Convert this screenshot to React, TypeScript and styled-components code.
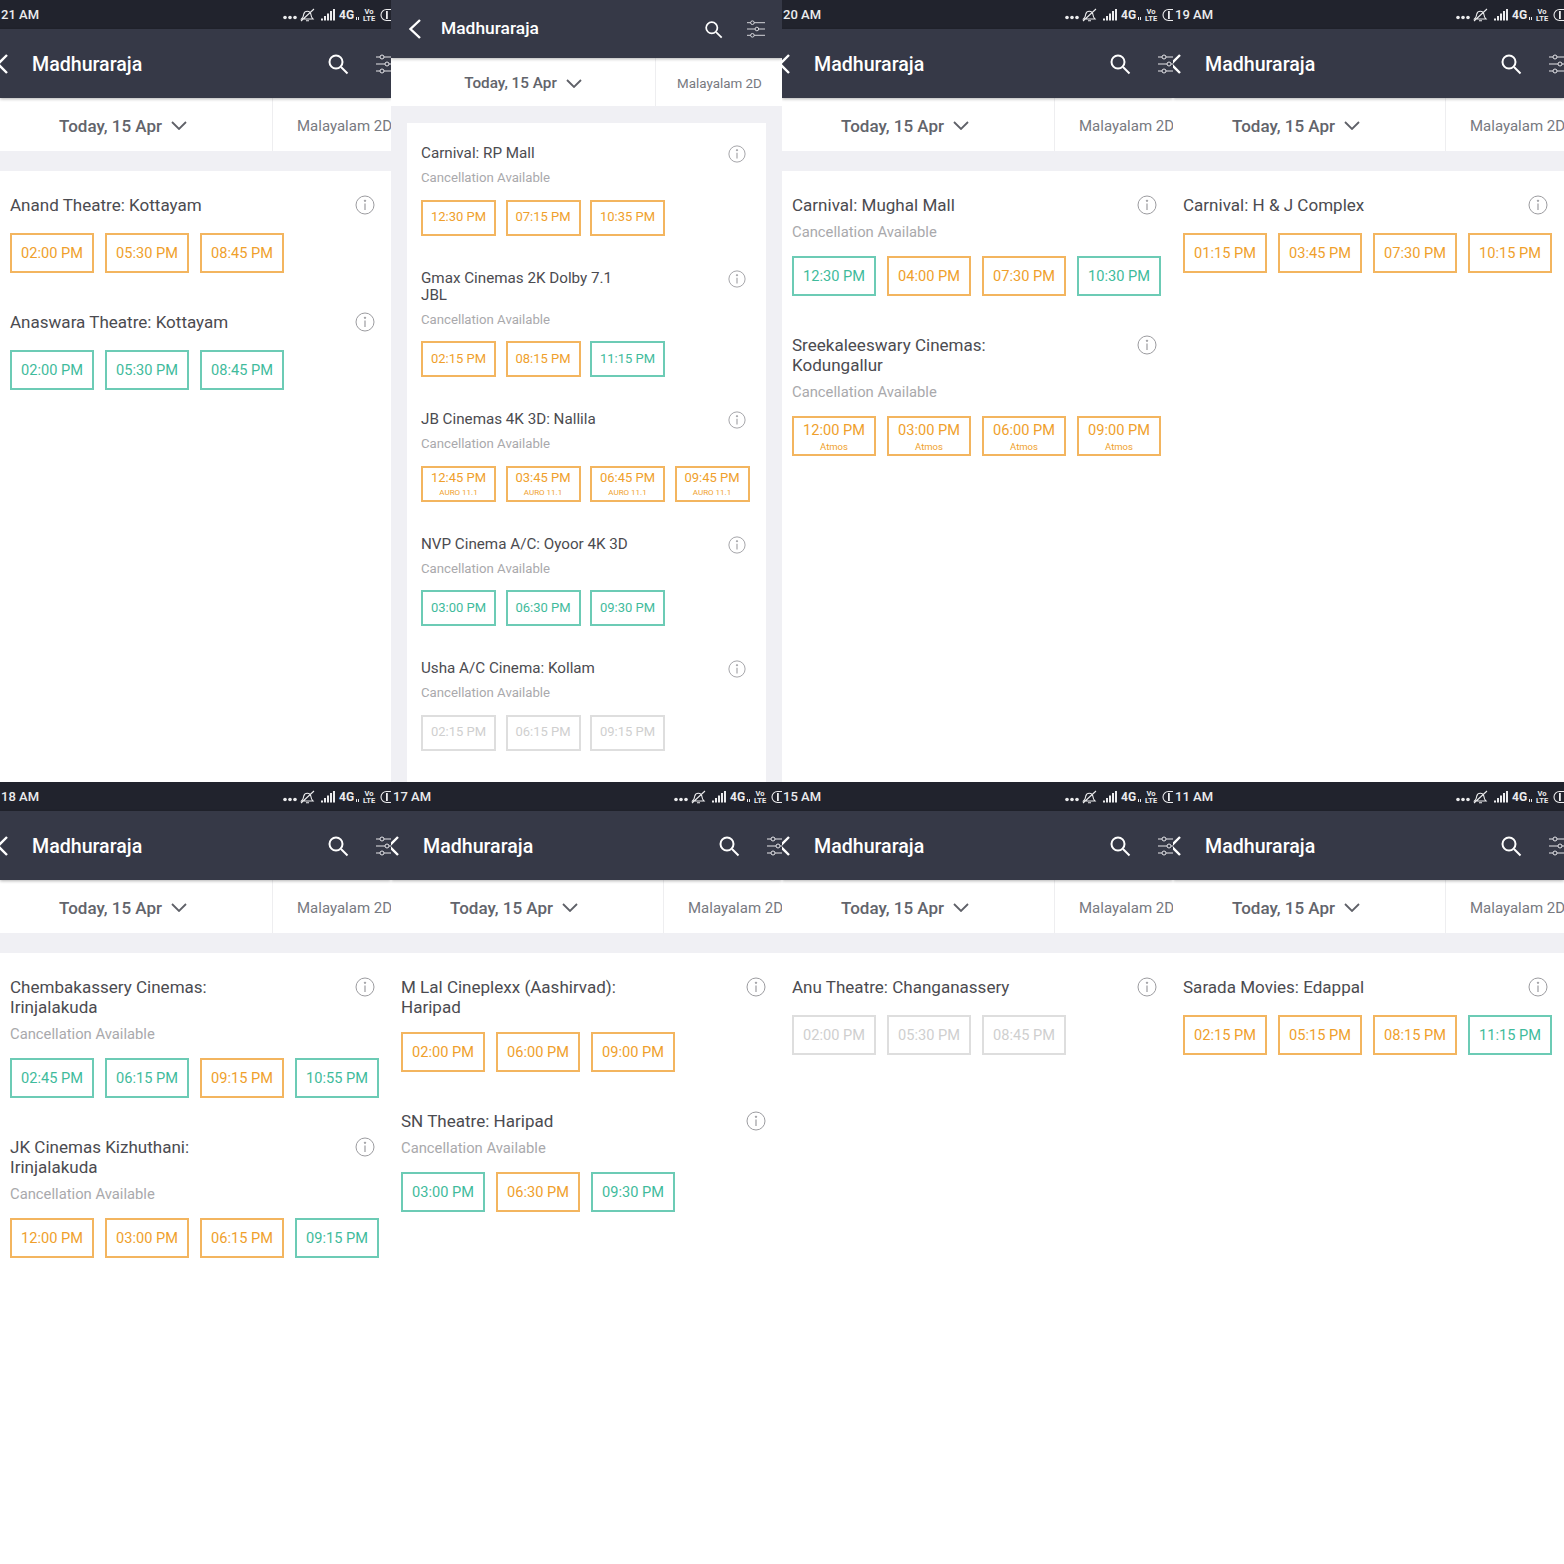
import React from "react";
import styled, { createGlobalStyle, ThemeProvider } from "styled-components";

const full = {
  headerH: 69, titleSize: 19.6, titleTop: 2, titleBottom: 0, backH: 20, searchSize: 22, filterW: 20,
  filterH: 53, dateW: 273, dateSize: 17, dateEnd: 26, langSize: 15, langLeft: 24,
  gutter: 20, sidePad: 0, cardPadTop: 24, cardPadLeft: 10, cardPadRight: 16,
  nameSize: 17.05, nameLine: 20, nameMax: 262, plainMin: 23, infoSize: 20, subSize: 14.8, subLine: 20, subTop: 7, subBottom: 14,
  plainBottom: 15, blockGap: 39, btnW: 84, btnH: 40, btnGap: 11, timeSize: 14.6, tagSize: 9.5, tagTop: 4,
};

const compact = {
  headerH: 58, titleSize: 17.4, titleTop: 0, titleBottom: 3, backH: 20, searchSize: 19, filterW: 18,
  filterH: 48, dateW: 265, dateSize: 15.3, dateEnd: 0, langSize: 13.4, langLeft: 21,
  gutter: 17, sidePad: 16, cardPadTop: 22, cardPadLeft: 14, cardPadRight: 20,
  nameSize: 15.2, nameLine: 17.5, nameMax: 212, plainMin: 0, infoSize: 18, subSize: 13.2, subLine: 18, subTop: 6, subBottom: 12.5,
  plainBottom: 13, blockGap: 34, btnW: 75, btnH: 36, btnGap: 9.5, timeSize: 13, tagSize: 8, tagTop: 3,
};

type Tone = "orange" | "teal" | "gray";
type Show = [string, Tone];
type Theatre = { name: string; cancel?: boolean; tag?: string; shows: Show[] };
type ScreenData = { clock?: string; clockLeft?: number; compact?: boolean; theatres: Theatre[] };

const o = (t: string): Show => [t, "orange"];
const g = (t: string): Show => [t, "teal"];
const x = (t: string): Show => [t, "gray"];

const screens: ScreenData[] = [
  {
    clock: "21 AM",
    clockLeft: 1,
    theatres: [
      { name: "Anand Theatre: Kottayam", shows: [o("02:00 PM"), o("05:30 PM"), o("08:45 PM")] },
      { name: "Anaswara Theatre: Kottayam", shows: [g("02:00 PM"), g("05:30 PM"), g("08:45 PM")] },
    ],
  },
  {
    compact: true,
    theatres: [
      { name: "Carnival: RP Mall", cancel: true, shows: [o("12:30 PM"), o("07:15 PM"), o("10:35 PM")] },
      { name: "Gmax Cinemas 2K Dolby 7.1 JBL", cancel: true, shows: [o("02:15 PM"), o("08:15 PM"), g("11:15 PM")] },
      { name: "JB Cinemas 4K 3D: Nallila", cancel: true, tag: "AURO 11.1", shows: [o("12:45 PM"), o("03:45 PM"), o("06:45 PM"), o("09:45 PM")] },
      { name: "NVP Cinema A/C: Oyoor 4K 3D", cancel: true, shows: [g("03:00 PM"), g("06:30 PM"), g("09:30 PM")] },
      { name: "Usha A/C Cinema: Kollam", cancel: true, shows: [x("02:15 PM"), x("06:15 PM"), x("09:15 PM")] },
    ],
  },
  {
    clock: "20 AM",
    clockLeft: 1,
    theatres: [
      { name: "Carnival: Mughal Mall", cancel: true, shows: [g("12:30 PM"), o("04:00 PM"), o("07:30 PM"), g("10:30 PM")] },
      { name: "Sreekaleeswary Cinemas: Kodungallur", cancel: true, tag: "Atmos", shows: [o("12:00 PM"), o("03:00 PM"), o("06:00 PM"), o("09:00 PM")] },
    ],
  },
  {
    clock: "19 AM",
    clockLeft: 2,
    theatres: [
      { name: "Carnival: H & J Complex", shows: [o("01:15 PM"), o("03:45 PM"), o("07:30 PM"), o("10:15 PM")] },
    ],
  },
  {
    clock: "18 AM",
    clockLeft: 1,
    theatres: [
      { name: "Chembakassery Cinemas: Irinjalakuda", cancel: true, shows: [g("02:45 PM"), g("06:15 PM"), o("09:15 PM"), g("10:55 PM")] },
      { name: "JK Cinemas Kizhuthani: Irinjalakuda", cancel: true, shows: [o("12:00 PM"), o("03:00 PM"), o("06:15 PM"), g("09:15 PM")] },
    ],
  },
  {
    clock: "17 AM",
    clockLeft: 2,
    theatres: [
      { name: "M Lal Cineplexx (Aashirvad): Haripad", shows: [o("02:00 PM"), o("06:00 PM"), o("09:00 PM")] },
      { name: "SN Theatre: Haripad", cancel: true, shows: [g("03:00 PM"), o("06:30 PM"), g("09:30 PM")] },
    ],
  },
  {
    clock: "15 AM",
    clockLeft: 1,
    theatres: [{ name: "Anu Theatre: Changanassery", shows: [x("02:00 PM"), x("05:30 PM"), x("08:45 PM")] }],
  },
  {
    clock: "11 AM",
    clockLeft: 2,
    theatres: [
      { name: "Sarada Movies: Edappal", shows: [o("02:15 PM"), o("05:15 PM"), o("08:15 PM"), g("11:15 PM")] },
    ],
  },
];

const toneColor: Record<Tone, { line: string; text: string }> = {
  orange: { line: "#f3b55f", text: "#ef9f2c" },
  teal: { line: "#6ccbb5", text: "#3fbb9c" },
  gray: { line: "#dedede", text: "#cfcfcf" },
};

const GlobalStyle = createGlobalStyle`
  html, body { margin: 0; padding: 0; background: #fff; }
  body { font-family: Roboto, "Liberation Sans", sans-serif; }
`;

const Wall = styled.div`
  display: grid;
  grid-template-columns: repeat(4, 391px);
  grid-auto-rows: 782px;
  width: 1564px;
`;

const Phone = styled.section`
  overflow: hidden;
  display: flex;
  flex-direction: column;
  background: ${(p) => (p.theme.sidePad ? "#f0f0f4" : "#fff")};
`;

const StatusBar = styled.div<{ $left: number }>`
  flex: 0 0 29px;
  display: flex;
  align-items: center;
  background: #21232d;
  color: #ececee;
  padding-left: ${(p) => p.$left}px;
`;

const Clock = styled.span`
  flex: 0 0 auto;
  font-size: 13px;
  font-weight: 500;
`;

const StatusIcons = styled.div`
  margin-left: auto;
  flex: 0 0 109px;
  min-width: 0;
  display: flex;
  align-items: center;
  svg {
    flex: 0 0 auto;
  }
`;

const NetLabel = styled.span`
  flex: 0 0 15px;
  font-size: 12px;
  font-weight: 700;
`;

const VoLte = styled.span`
  flex: 0 0 14px;
  font-size: 7.5px;
  line-height: 7px;
  font-weight: 700;
  text-align: center;
  margin-left: 2px;
`;

const Header = styled.header`
  flex: 0 0 ${(p) => p.theme.headerH}px;
  display: flex;
  align-items: center;
  background: #363947;
  box-shadow: 0 1px 3px rgba(0, 0, 0, 0.3);
  position: relative;
  z-index: 1;
  color: #fff;
`;

const Back = styled.svg<{ $clipped: boolean }>`
  flex: 0 0 auto;
  margin-left: ${(p) => (p.$clipped ? -2 : 17)}px;
  width: ${(p) => (p.$clipped ? 10 : 13)}px;
  height: ${(p) => p.theme.backH}px;
`;

const Title = styled.h1<{ $clipped: boolean }>`
  margin: 0 0 0 ${(p) => (p.$clipped ? 24 : 20)}px;
  padding: ${(p) => p.theme.titleTop}px 0 ${(p) => p.theme.titleBottom}px;
  flex: 1;
  font-size: ${(p) => p.theme.titleSize}px;
  font-weight: 500;
`;

const SearchIcon = styled.svg`
  width: ${(p) => p.theme.searchSize}px;
  height: ${(p) => p.theme.searchSize}px;
  flex: 0 0 auto;
`;

const SlidersIcon = styled.svg<{ $clipped: boolean }>`
  flex: 0 0 auto;
  margin-left: ${(p) => (p.$clipped ? 27 : 24)}px;
  margin-right: ${(p) => (p.$clipped ? -5 : 17)}px;
  width: ${(p) => p.theme.filterW}px;
  height: 20px;
`;

const FilterBar = styled.div`
  flex: 0 0 ${(p) => p.theme.filterH}px;
  display: flex;
  background: #fff;
`;

const DateCell = styled.div`
  flex: 0 0 ${(p) => p.theme.dateW}px;
  box-sizing: border-box;
  display: flex;
  align-items: center;
  justify-content: center;
  gap: 9px;
  padding: 2px ${(p) => p.theme.dateEnd}px 0 0;
  border-right: 1px solid #eeeef0;
  color: #62646b;
  font-size: ${(p) => p.theme.dateSize}px;
  font-weight: 500;
`;

const LangCell = styled.div`
  display: flex;
  align-items: center;
  white-space: nowrap;
  padding: 2px 0 0 ${(p) => p.theme.langLeft}px;
  color: #77797f;
  font-size: ${(p) => p.theme.langSize}px;
`;

const Gutter = styled.div`
  flex: 0 0 ${(p) => p.theme.gutter}px;
  background: #f0f0f4;
`;

const Card = styled.main`
  flex: 1;
  margin: 0 ${(p) => p.theme.sidePad}px;
  padding: ${(p) => p.theme.cardPadTop}px ${(p) => p.theme.cardPadRight}px 0 ${(p) => p.theme.cardPadLeft}px;
  background: #fff;
  display: flex;
  flex-direction: column;
  gap: ${(p) => p.theme.blockGap}px;
`;

const NameRow = styled.div<{ $cancel: boolean }>`
  display: flex;
  justify-content: space-between;
  align-items: flex-start;
  min-height: ${(p) => (p.$cancel ? 0 : p.theme.plainMin)}px;
`;

const Name = styled.h2`
  margin: 0;
  max-width: ${(p) => p.theme.nameMax}px;
  color: #4b4b50;
  font-size: ${(p) => p.theme.nameSize}px;
  line-height: ${(p) => p.theme.nameLine}px;
  font-weight: 400;
`;

const InfoIcon = styled.svg`
  flex: 0 0 auto;
  width: ${(p) => p.theme.infoSize}px;
  height: ${(p) => p.theme.infoSize}px;
`;

const Cancellation = styled.div`
  margin-top: ${(p) => p.theme.subTop}px;
  color: #a9a9ac;
  font-size: ${(p) => p.theme.subSize}px;
  line-height: ${(p) => p.theme.subLine}px;
`;

const Shows = styled.div<{ $cancel: boolean }>`
  display: flex;
  gap: ${(p) => p.theme.btnGap}px;
  margin-top: ${(p) => (p.$cancel ? p.theme.subBottom : p.theme.plainBottom)}px;
  white-space: nowrap;
`;

const ShowButton = styled.button<{ $tone: Tone }>`
  flex: 0 0 ${(p) => p.theme.btnW}px;
  height: ${(p) => p.theme.btnH}px;
  box-sizing: border-box;
  padding: 0;
  display: flex;
  flex-direction: column;
  align-items: center;
  justify-content: center;
  background: #fff;
  border: 2px solid ${(p) => toneColor[p.$tone].line};
  color: ${(p) => toneColor[p.$tone].text};
  font-family: inherit;
  font-size: ${(p) => p.theme.timeSize}px;
  line-height: 1.1;
`;

const ShowTag = styled.span`
  font-size: ${(p) => p.theme.tagSize}px;
  margin-top: ${(p) => p.theme.tagTop}px;
  margin-bottom: ${(p) => 2 - p.theme.tagTop}px;
  line-height: 1;
`;

const NetworkIcons = () => (
  <StatusIcons>
    <svg width="18" height="14" viewBox="0 0 18 14">
      <circle cx="3" cy="9.500" r="1.800" fill="#ececee" />
      <circle cx="8" cy="9.500" r="1.800" fill="#ececee" />
      <circle cx="13" cy="9.500" r="1.800" fill="#ececee" />
    </svg>
    <svg width="15" height="14" viewBox="0 0 15 14" fill="none" stroke="#ececee" strokeWidth="1.100">
      <path d="M1.500 11h11.500c-1.500-1.500-2-3-2.200-5a3.600 3.600 0 0 0-7 0c-.2 2-.8 3.500-2.300 5zM6 12.800h3M1 13L14 1" />
    </svg>
    <svg width="20" height="14" viewBox="0 0 20 14" fill="#ececee" style={{ marginLeft: 5 }}>
      <rect x="1" y="10.500" width="2" height="2" />
      <rect x="4" y="8" width="2" height="4.500" />
      <rect x="7" y="5.500" width="2" height="7" />
      <rect x="10" y="3" width="2" height="9.500" />
      <rect x="13" y="1" width="2" height="11.500" />
    </svg>
    <NetLabel style={{ marginLeft: -1 }}>4G</NetLabel>
    <svg width="6" height="14" viewBox="0 0 6 14" fill="#ececee">
      <rect x="2" y="9" width="1" height="3" />
      <rect x="4" y="9" width="1" height="3" />
    </svg>
    <VoLte>
      Vo
      <br />
      LTE
    </VoLte>
    <svg width="20" height="14" viewBox="0 0 20 14" fill="none" stroke="#ececee" strokeWidth="1.100" style={{ marginLeft: 4 }}>
      <rect x="1" y="1.500" width="18" height="11" rx="5.500" />
      <rect x="6" y="3" width="1.800" height="8" fill="#ececee" stroke="none" />
    </svg>
  </StatusIcons>
);

const Screen = ({ data }: { data: ScreenData }) => {
  const clipped = !data.compact;
  return (
    <ThemeProvider theme={data.compact ? compact : full}>
      <Phone>
        {data.clock && (
          <StatusBar $left={data.clockLeft ?? 1}>
            <Clock>{data.clock}</Clock>
            <NetworkIcons />
          </StatusBar>
        )}
        <Header>
          <Back $clipped={clipped} viewBox={clipped ? "0 0 10 20" : "0 0 13 20"} fill="none" stroke="#fff" strokeWidth="2.4">
            {clipped ? <path d="M9 1L0 10l9 9" /> : <path d="M12 1L2.500 10l9.500 9" />}
          </Back>
          <Title $clipped={clipped}>Madhuraraja</Title>
          <SearchIcon viewBox="0 0 22 22" fill="none" stroke="#fff" strokeWidth="2">
            <circle cx="9" cy="9" r="6.500" />
            <path d="M14 14l6.500 6.500" />
          </SearchIcon>
          <SlidersIcon $clipped={clipped} viewBox="0 0 20 20" fill="none" stroke="#e6e6ea" strokeWidth="1">
            <path d="M0 3h4M8 3h12M0 10h9M13 10h7M0 17h4M8 17h12" />
            <circle cx="6" cy="3" r="2" />
            <circle cx="11" cy="10" r="2" />
            <circle cx="6" cy="17" r="2" />
          </SlidersIcon>
        </Header>
        <FilterBar>
          <DateCell>
            Today, 15 Apr
            <svg width="16" height="9" viewBox="0 0 16 9" fill="none" stroke="#5f6168" strokeWidth="1.800">
              <path d="M1 1l7 7 7-7" />
            </svg>
          </DateCell>
          <LangCell>Malayalam 2D</LangCell>
        </FilterBar>
        <Gutter />
        <Card>
          {data.theatres.map((t) => (
            <div key={t.name}>
              <NameRow $cancel={!!t.cancel}>
                <Name>{t.name}</Name>
                <InfoIcon viewBox="0 0 20 20" fill="none" stroke="#9c9ca0">
                  <circle cx="10" cy="10" r="9" strokeWidth="1" />
                  <path d="M10 8.500V15" strokeWidth="1.200" />
                  <circle cx="10" cy="5.800" r="0.700" fill="#9c9ca0" />
                </InfoIcon>
              </NameRow>
              {t.cancel && <Cancellation>Cancellation Available</Cancellation>}
              <Shows $cancel={!!t.cancel}>
                {t.shows.map(([time, tone]) => (
                  <ShowButton key={time} $tone={tone}>
                    {time}
                    {t.tag && <ShowTag>{t.tag}</ShowTag>}
                  </ShowButton>
                ))}
              </Shows>
            </div>
          ))}
        </Card>
      </Phone>
    </ThemeProvider>
  );
};

export default function App() {
  return (
    <>
      <GlobalStyle />
      <Wall>
        {screens.map((s, i) => (
          <Screen key={i} data={s} />
        ))}
      </Wall>
    </>
  );
}
